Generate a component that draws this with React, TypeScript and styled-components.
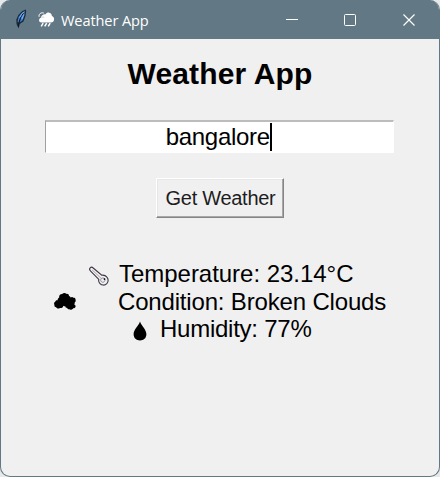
import React from 'react';
import styled, { createGlobalStyle } from 'styled-components';

const GlobalStyle = createGlobalStyle`
  * { box-sizing: border-box; }
  body { margin: 0; background: #e6e8e9; overflow: hidden; }
`;

const Window = styled.div`
  width: 440px;
  height: 477px;
  display: flex;
  flex-direction: column;
  border: 1px solid #627884;
  border-top: 0;
  border-radius: 10px;
  overflow: hidden;
  background: #f0f0f0;
  color: #000;
  font-family: 'Liberation Sans', Arial, sans-serif;
`;

const TitleBar = styled.header`
  height: 39px;
  flex: none;
  display: flex;
  align-items: center;
  padding-left: 12px;
  background: #627884;
  color: #fff;
`;

const WindowTitle = styled.span`
  flex: 1;
  margin-left: 6px;
  font: 14.6px/20px 'Open Sans', 'Noto Sans', sans-serif;
  letter-spacing: -0.12px;
  white-space: nowrap;
`;

const Controls = styled.div`
  display: flex;
`;

const Control = styled.span`
  width: 58px;
  height: 39px;
  display: flex;
  align-items: center;
  justify-content: center;
  &:last-child { width: 60px; }
`;

const Content = styled.main`
  display: flex;
  flex-direction: column;
  align-items: center;
`;

const Heading = styled.h1`
  margin: 17px 0 0;
  font-size: 30px;
  line-height: 36px;
  font-weight: bold;
  letter-spacing: 0.14px;
  white-space: nowrap;
`;

const CityField = styled.div`
  width: 349px;
  height: 33px;
  margin-top: 28px;
  margin-right: 2px;
  display: flex;
  align-items: center;
  justify-content: center;
  border: 1px solid #fff;
  border-top: 2px solid #bcbcbc;
  border-left: 1px solid #a0a0a0;
  background: #fff;
  font-size: 24px;
  line-height: 28px;
  letter-spacing: -0.28px;
`;

const Caret = styled.i`
  width: 2.5px;
  height: 28px;
  background: #000;
`;

const GetButton = styled.button`
  width: 128px;
  height: 40px;
  margin-top: 25px;
  padding: 0 0 0 1px;
  border: 1px solid;
  border-color: #fff #858585 #858585 #fff;
  box-shadow: inset -1px -1px #a8a8a8, inset 1px 1px #e7e7e7;
  background: #f0f0f0;
  color: #1d1d1d;
  font: 20px/24px 'Liberation Sans', Arial, sans-serif;
  letter-spacing: -0.28px;
  white-space: nowrap;
`;

const Results = styled.section`
  width: 332px;
  margin-top: 42px;
  display: flex;
  flex-direction: column;
  font-size: 24px;
`;

const ResultLine = styled.div<{ $indent: number; $gap: number; $spacing: number }>`
  height: 27.7px;
  display: flex;
  align-items: center;
  padding-left: ${p => p.$indent}px;
  gap: ${p => p.$gap}px;
  letter-spacing: ${p => p.$spacing}px;
  white-space: nowrap;
`;

const Icon = styled.svg<{ $drop?: number; $start?: number }>`
  flex: none;
  display: block;
  margin-top: ${p => (p.$drop ?? 0) * 2}px;
  margin-left: ${p => p.$start ?? 0}px;
`;

const FeatherIcon = () => (
  <Icon width="16" height="22" viewBox="0 0 16 22" $drop={-0.5}>
    <path d="M12.6 1.4 9 3.2 5.4 7 3.3 11.5 3.5 16l2 4.5 1.2-4.5 3.8-2.4 2-5.6.7-5Z" fill="#1b2b3b" />
    <path d="M11.8 2.8 8.5 5.2 5.5 9.3l-.9 4.5 1 1.2L8 8.6 7 14.2l2.6-1.9 1.8-5Z" fill="#3f83d8" />
    <path d="m10.8 4.5-3.2 5-1.7 5-.4 4.5" stroke="#101820" fill="none" />
    <path d="m11.2 4-2.5 2-1.9 3.3M10.7 6.5 9 11" stroke="#87b6ef" strokeWidth=".9" fill="none" />
  </Icon>
);

const RainIcon = () => (
  <Icon width="17" height="17" viewBox="0 0 17 17" fill="#fff" $start={9}>
    <path d="M3.8 11.5C1.6 11.5.8 10.3 1.1 8.8c.2-1 .8-1.8 1.8-2.1C3.4 4.2 5.2 3 7.5 3.3 8.5 1.8 10 1.3 11.4 1.8c1.6.5 2.5 1.7 2.5 3.3 1.4.4 2.2 1.6 2.2 3.1 0 2-1.4 3.3-3.2 3.3Z" />
    <path d="M1.1 5.8C.5 3.2 2.7 1.2 5.8 2" stroke="#fff" fill="none" />
    <path d="m5.2 12.2-2 3.2M8.7 12.2l-2 3.2M12.2 12.2l-2 3.2" stroke="#fff" strokeWidth="1.5" />
    <path d="M3.3 6.8c1-.9 2-.9 3-.5" stroke="#9babb3" strokeWidth=".5" fill="none" />
  </Icon>
);

const ThermometerIcon = () => (
  <Icon width="20" height="20" viewBox="0 0 20 20" fill="none" stroke="#3c3548" $drop={2}>
    <path d="M1 1.2c.8-.8 2.1-.8 3 .1l8.5 7.2c1.9-.3 3.8.2 5 1.6 1.9 1.9 1.9 5 .1 6.9-1.9 1.9-5 1.8-6.8-.1-1.1-1.2-1.6-2.8-1.2-4.3L1.2 4.2C.3 3.3.2 2 1 1.2Z" strokeWidth="1.1" transform="translate(.2 .7)" />
    <path d="m3.2 4 9 8.4" stroke="#ad9690" strokeWidth=".9" />
    <path d="M12.3 12.6c.9-.9 2.2-.9 3 0s.9 2.1 0 3-2.1.9-3 0-.8-2.1 0-3Z" stroke="#6c6479" strokeWidth=".7" />
    <path d="M15.5 12.3v1.7" stroke="#111" strokeWidth="1.4" />
  </Icon>
);

const CloudIcon = () => (
  <Icon width="22" height="17" viewBox="0 0 22 17">
    <path d="M5.2 4.6C4.8 2.5 6.2.9 8.2 1c1-1.2 3.3-1.3 4.3-.1 1.5-.3 2.6.8 2.5 2.2.9.3 1.4.8 1.6 1.5.9-.9 2.2-.7 2.8.1 1.3-.3 2.4.7 2.1 2 .5 1.2.1 2.2-.8 2.7.3.8-.1 1.4-.8 1.8 1.5.5 2.1 2 1.4 3.1-.4.8-1.2 1.1-2.1.9-.8 1.5-2.6 1.9-4 1.1-1 .1-1.7-.4-2-1.2-1.2-.1-1.9-.8-1.9-1.8-.8.1-1.4-.1-1.9-.5-.5 1.8-2 2.7-3.5 2.1-1.1 1-2.9.8-3.5-.5C.9 14.2.1 13.1.5 12-.3 10.8.1 9.3 1.3 8.7c.2-1.1 1.2-1.7 2.3-1.4.1-1.2.6-2.2 1.6-2.7Z" fill="#000" />
  </Icon>
);

const DropIcon = () => (
  <Icon width="14" height="20" viewBox="0 0 14 20" $drop={2}>
    <path d="M7 .5C5.5 5 .6 8.6.6 13.2.6 17 3.4 19.4 7 19.4s6.4-2.4 6.4-6.2C13.4 8.6 8.5 5 7 .5Z" fill="#000" />
  </Icon>
);

export default function App() {
  return (
    <>
      <GlobalStyle />
      <Window>
        <TitleBar>
          <FeatherIcon />
          <RainIcon />
          <WindowTitle>Weather App</WindowTitle>
          <Controls>
            <Control><svg width="12" height="12"><path d="M0 5.5h12" stroke="#fff" /></svg></Control>
            <Control><svg width="12" height="12"><rect x=".5" y=".5" width="11" height="11" rx="1" stroke="#fff" fill="none" /></svg></Control>
            <Control><svg width="12" height="12"><path d="m.5.5 11 11m0-11-11 11" stroke="#fff" strokeWidth="1.15" /></svg></Control>
          </Controls>
        </TitleBar>
        <Content>
          <Heading>Weather App</Heading>
          <CityField><span>bangalore</span><Caret /></CityField>
          <GetButton>Get Weather</GetButton>
          <Results>
            <ResultLine $indent={35} $gap={10} $spacing={-0.03}><ThermometerIcon /><span>Temperature: 23.14°C</span></ResultLine>
            <ResultLine $indent={0} $gap={42} $spacing={-0.17}><CloudIcon /><span>Condition: Broken Clouds</span></ResultLine>
            <ResultLine $indent={79} $gap={13} $spacing={-0.25}><DropIcon /><span>Humidity: 77%</span></ResultLine>
          </Results>
        </Content>
      </Window>
    </>
  );
}
